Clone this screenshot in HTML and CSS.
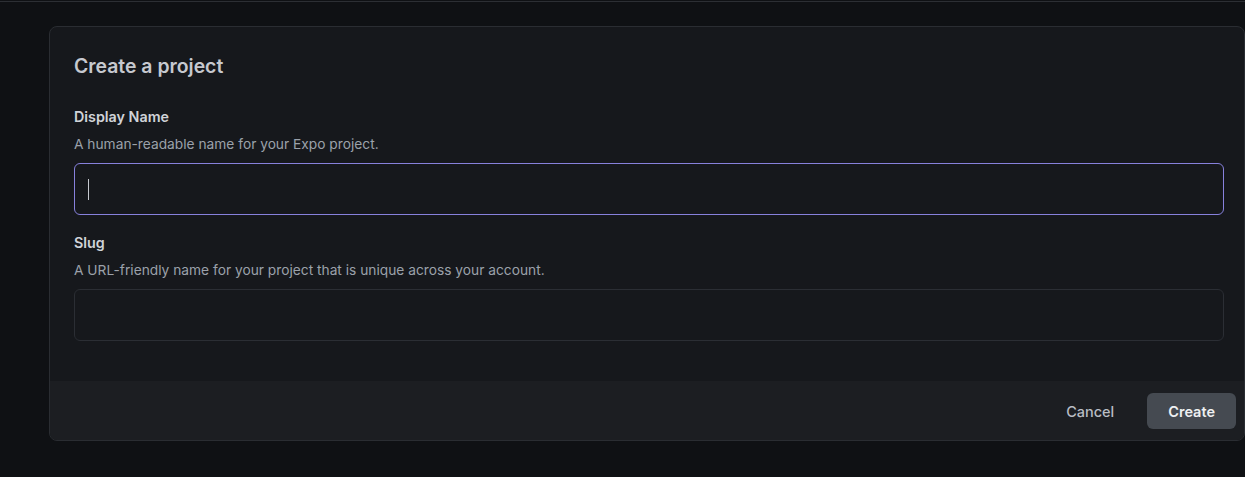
FILE: index.html
```html
<!DOCTYPE html>
<html lang="en">
<head>
<meta charset="utf-8">
<title>Create a project</title>
<link rel="stylesheet" href="styles.css">
</head>
<body>
<div class="topbar"></div>
<main class="page">
  <section class="card">
    <div class="card-body">
      <h2 class="title">Create a project</h2>
      <div class="field field-first">
        <div class="label">Display Name</div>
        <div class="desc">A human-readable name for your Expo project.</div>
        <div class="input input-focus"><span class="caret"></span></div>
      </div>
      <div class="field">
        <div class="label">Slug</div>
        <div class="desc">A URL-friendly name for your project that is unique across your account.</div>
        <div class="input"></div>
      </div>
    </div>
    <footer class="card-footer">
      <button class="btn btn-ghost">Cancel</button>
      <button class="btn btn-primary">Create</button>
    </footer>
  </section>
</main>
</body>
</html>
```

FILE: styles.css
```css
* { box-sizing: border-box; }
html, body {
  margin: 0;
  padding: 0;
  background: #0f1114;
  font-family: Inter, "Noto Sans", "Liberation Sans", sans-serif;
  height: 100%;
  overflow: hidden;
}
.topbar {
  height: 2px;
  border-bottom: 1px solid #2c2f34;
}
.page {
  padding: 24px 0 0 49px;
}
.card {
  width: 1196px;
  background: #16181c;
  border: 1px solid #2a2d32;
  border-radius: 8px;
  overflow: hidden;
}
.card-body {
  padding: 25px 20px 40px 24px;
}
.title {
  margin: 0;
  font-size: 19.4px;
  line-height: 28px;
  font-weight: 600;
  color: #c6c9cf;
}
.field { margin-top: 17px; }
.field-first { margin-top: 26px; }
.label {
  font-size: 14.3px;
  line-height: 22px;
  font-weight: 600;
  color: #d0d3d8;
}
.desc {
  margin-top: 6px;
  font-size: 13.75px;
  line-height: 20px;
  color: #9ba1aa;
}
.input {
  margin-top: 9px;
  height: 52px;
  border: 1px solid #2b2e34;
  border-radius: 6px;
  background: #16181c;
  display: flex;
  align-items: center;
}
.input-focus {
  border-color: #8781dc;
}
.caret {
  display: block;
  width: 1px;
  height: 21px;
  margin-left: 13px;
  background: #c6c9cf;
}
.card-footer {
  background: #1c1e22;
  display: flex;
  justify-content: flex-end;
  gap: 12px;
  padding: 12px 8px 11px 0;
}
.btn {
  font-family: inherit;
  font-size: 14.5px;
  font-weight: 500;
  height: 36px;
  padding: 0 21px;
  border: none;
  border-radius: 6px;
  cursor: pointer;
}
.btn-ghost {
  background: transparent;
  color: #b9bdc4;
}
.btn-primary {
  background: #454a51;
  color: #eef0f2;
  font-weight: 600;
}
```
